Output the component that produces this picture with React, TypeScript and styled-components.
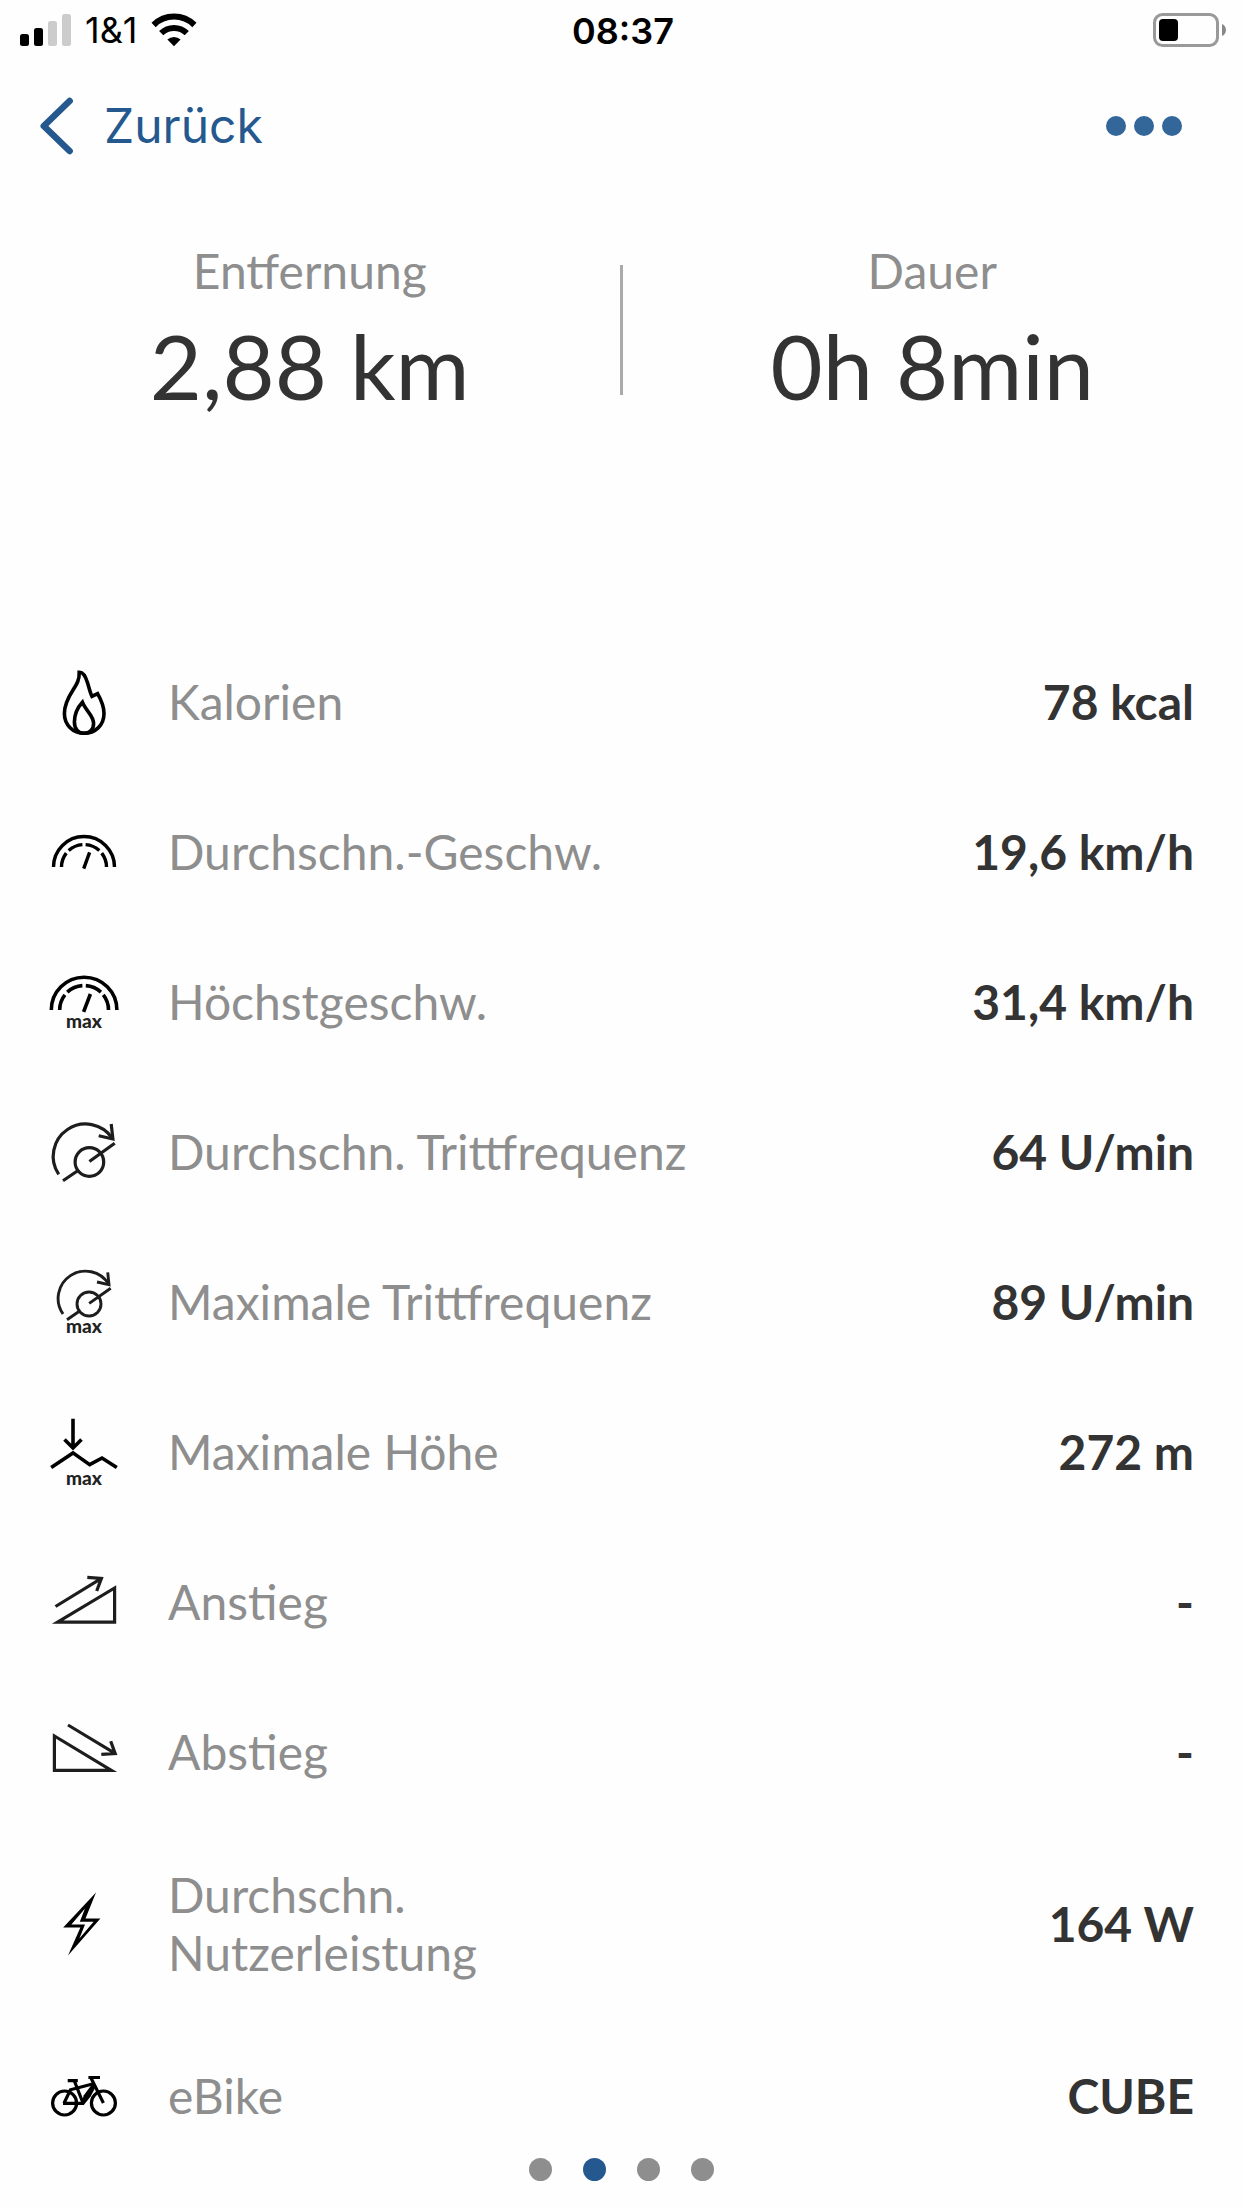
import React from "react";
import styled, { createGlobalStyle } from "styled-components";

const INK = "#333333";
const MUTED = "#8e8e8e";
const BLUE = "#24588f";
const SYSTEM_FONT = 'Inter, "Liberation Sans", sans-serif';
const APP_FONT = 'Lato, "Open Sans", sans-serif';

const GlobalStyle = createGlobalStyle`
  *, *::before, *::after { box-sizing: border-box; }
  body { margin: 0; background: #fefefe; color: ${INK}; font-family: ${APP_FONT}; }
`;

const Screen = styled.div`
  display: flex;
  flex-direction: column;
  min-height: 100vh;
`;

const StatusBar = styled.div`
  display: grid;
  grid-template-columns: 1fr auto 1fr;
  align-items: center;
  height: 60px;
  padding: 0 16px 0 20px;
  color: #000;
  font-family: ${SYSTEM_FONT};
`;

const Carrier = styled.div`
  display: flex;
  align-items: center;
  gap: 14px;
  font-size: 36px;
  line-height: 40px;
`;

const Clock = styled.time`
  padding-top: 2px;
  font-size: 36px;
  line-height: 40px;
  font-weight: 600;
`;

const BatterySlot = styled.div`
  display: flex;
  justify-content: flex-end;
`;

const NavBar = styled.header`
  display: flex;
  align-items: center;
  justify-content: space-between;
  height: 132px;
  padding: 0 60px 0 40px;
`;

const BackButton = styled.button`
  display: flex;
  align-items: center;
  gap: 30px;
  padding: 0;
  border: 0;
  background: none;
  color: ${BLUE};
  font-family: ${SYSTEM_FONT};
  font-size: 48px;
  line-height: 60px;
`;

const MoreButton = styled.button`
  display: flex;
  gap: 8px;
  padding: 0;
  border: 0;
  background: none;
`;

const MoreDot = styled.span`
  width: 20px;
  height: 20px;
  border-radius: 50%;
  background: #336699;
`;

const Summary = styled.dl`
  display: flex;
  margin: 0;
  padding: 48px 0 200px;
`;

const SummaryItem = styled.div`
  flex: 1 1 0;
  display: flex;
  flex-direction: column;
  align-items: center;
`;

const SummaryLabel = styled.dt`
  color: ${MUTED};
  font-size: 48px;
  line-height: 62px;
`;

const SummaryValue = styled.dd`
  margin: 0;
  font-size: 90px;
  line-height: 126px;
`;

const Divider = styled.div`
  width: 3px;
  height: 130px;
  margin-top: 25px;
  background: #aaaaaa;
`;

const StatList = styled.dl`
  margin: 0;
  padding: 0 48px;
`;

const StatRow = styled.div`
  display: flex;
  align-items: center;
  min-height: 150px;
  padding: 38px 0 40px;
  font-size: 48px;
  line-height: 58px;
`;

const StatLabel = styled.dt`
  max-width: 528px;
  margin-left: 48px;
  color: ${MUTED};
`;

const StatValue = styled.dd`
  margin: 0 0 0 auto;
  font-weight: 700;
  white-space: nowrap;
`;

const IconSvg = styled.svg`
  flex: none;
  width: 72px;
  height: 72px;
  margin: -6px 0 -8px;
  overflow: visible;
`;

const IconText = styled.text`
  fill: #222;
  stroke: none;
  font-family: ${APP_FONT};
  font-size: 19px;
  font-weight: 900;
  text-anchor: middle;
`;

const Pager = styled.nav`
  position: fixed;
  left: 0;
  right: 0;
  bottom: 27px;
  display: flex;
  justify-content: center;
  gap: 31px;
`;

const PageDot = styled.button<{ $active: boolean }>`
  width: 23px;
  height: 23px;
  padding: 0;
  border: 0;
  border-radius: 50%;
  background: ${(p) => (p.$active ? BLUE : MUTED)};
`;

type IconProps = { weight?: number; color?: string; children: React.ReactNode };

function Icon({ weight = 3.6, color = "#000", children }: IconProps) {
  return (
    <IconSvg viewBox="0 0 72 72" fill="none" stroke={color} strokeWidth={weight} aria-hidden="true">
      {children}
    </IconSvg>
  );
}

const flame = (
  <Icon>
    <path d="M31.2 5.2C35.5 4.8 38 10.5 39.6 16C41 20.5 42 25.5 44 29.4L49.6 26.6C53.5 33.5 56 39.5 56 46.5C56 58.5 47 66.3 36.2 66.3C25 66.3 16.4 58 16.4 46.5C16.4 37 20.5 30 25 23C29 16.8 31.6 12.5 31.2 5.2Z" />
    <path d="M34.4 35.2C37.5 43.5 45.6 48.5 45.6 56.5C45.6 62 42 66.2 36 66.2C30 66.2 26.4 61.5 26.4 55C26.4 46.5 29.5 40.5 34.4 35.2Z" />
  </Icon>
);

const gauge = (
  <Icon weight={3.4}>
    <path d="M5.5 50A30.5 30.5 0 0 1 66.5 50" />
    <path d="M13.5 50A22.5 22.5 0 0 1 18.3 36.1M20.7 33.5A22.5 22.5 0 0 1 34.4 27.6M37.6 27.6A22.5 22.5 0 0 1 51.3 33.5M53.7 36.1A22.5 22.5 0 0 1 58.5 50" />
    <path d="M35.7 51.7L41.6 35.3" />
  </Icon>
);

const gaugeMax = (
  <Icon>
    <path d="M3.3 43A32.8 32.8 0 0 1 68.9 43" />
    <path d="M11.7 43A24.4 24.4 0 0 1 16.9 27.9M19.3 25.1A24.4 24.4 0 0 1 34.4 18.6M37.8 18.6A24.4 24.4 0 0 1 52.9 25.1M55.3 27.9A24.4 24.4 0 0 1 60.5 43" />
    <path d="M35.6 44.8L42.4 27" />
    <IconText x="36" y="61">max</IconText>
  </Icon>
);

const cadence = (
  <Icon weight={3.2} color="#1d1d1d">
    <path d="M10.7 57.3A32 32 0 1 1 64.3 21.3" />
    <path d="M63.2 7L64.9 22L50.7 18.8" />
    <circle cx="41.4" cy="45" r="14.3" />
    <path d="M41.4 44.5L66.7 26.3M15 63.7L29.7 53.7" />
  </Icon>
);

const cadenceMax = (
  <Icon weight={2.9} color="#1d1d1d">
    <path d="M15 47A27.3 27.3 0 1 1 60.6 17" />
    <path d="M59.7 5.3L61 17.7L49 15" />
    <circle cx="41" cy="37" r="12" />
    <path d="M41.2 36.4L62.7 21.3M19 52.7L31.3 44.3" />
    <IconText x="36" y="66">max</IconText>
  </Icon>
);

const altitudeMax = (
  <Icon>
    <path d="M25 1.7V30.5M16.5 22.5L25 31L33.5 22.5" />
    <path d="M3.2 50.6L25 35.9L41.7 47.7L54 41L68.8 50.6" />
    <IconText x="36" y="68">max</IconText>
  </Icon>
);

const ascent = (
  <Icon weight={3.2} color="#1d1d1d">
    <path d="M7.5 39.5L53 11.6M39.3 10.4L53.4 11.4L48.7 24" />
    <path d="M9.6 55.2L66.6 21V55.2Z" />
  </Icon>
);

const descent = (
  <Icon weight={3.2} color="#1d1d1d">
    <path d="M20 8L67 36.4M62.7 24.2L67.2 36.6L53.3 37.4" />
    <path d="M6.4 19V53.3H63.4Z" />
  </Icon>
);

const bolt = (
  <Icon>
    <path
      fill="#000"
      stroke="none"
      fillRule="evenodd"
      d="M48 3.6L37.5 29.5H52.4L20 66.4L32.4 38.4H15.2ZM23.4 35.6L37 19.4L31.8 32.8H45.6L31.4 49.6L37 35.6Z"
    />
  </Icon>
);

const bike = (
  <Icon weight={3.2}>
    <circle cx="16.6" cy="42" r="12" />
    <circle cx="55.4" cy="42" r="12" />
    <path d="M19.7 19.6H29.8M40.4 16.5H52" />
    <path d="M26.4 20L34.6 41M43 17L55.4 42" />
    <path d="M16 42.3L22.4 28.8L45.5 22.8M15 42.4H36" />
    <path fill="#000" stroke="none" d="M33.4 43.8L35.6 34.6L45 22L47.6 26L42.6 35.6L36 43.8Z" />
  </Icon>
);

const stats = [
  { label: "Kalorien", value: "78 kcal", icon: flame },
  { label: "Durchschn.-Geschw.", value: "19,6 km/h", icon: gauge },
  { label: "Höchstgeschw.", value: "31,4 km/h", icon: gaugeMax },
  { label: "Durchschn. Trittfrequenz", value: "64 U/min", icon: cadence },
  { label: "Maximale Trittfrequenz", value: "89 U/min", icon: cadenceMax },
  { label: "Maximale Höhe", value: "272 m", icon: altitudeMax },
  { label: "Anstieg", value: "-", icon: ascent },
  { label: "Abstieg", value: "-", icon: descent },
  { label: "Durchschn. Nutzerleistung", value: "164 W", icon: bolt },
  { label: "eBike", value: "CUBE", icon: bike },
];

export default function App() {
  const [page, setPage] = React.useState(1);
  return (
    <Screen>
      <GlobalStyle />
      <StatusBar>
        <Carrier>
          <svg width="51" height="32" viewBox="0 0 51 32" aria-hidden="true">
            <rect y="20" width="9" height="12" rx="2.5" />
            <rect x="14" y="14" width="9" height="18" rx="2.5" />
            <rect x="28" y="7" width="9" height="25" rx="2.5" fill="#ccc" />
            <rect x="42" width="9" height="32" rx="2.5" fill="#ccc" />
          </svg>
          <span>1&amp;1</span>
          <svg width="46" height="34" viewBox="0 0 46 34" fill="none" stroke="#000" aria-hidden="true">
            <path strokeWidth="6" d="M2.6 12A29 29 0 0 1 43.4 12" />
            <path strokeWidth="6" d="M10.2 20.2A18.4 18.4 0 0 1 35.8 20.2" />
            <path fill="#000" stroke="none" d="M16.4 26.6A9.6 9.6 0 0 1 29.6 26.6L23 33.2Z" />
          </svg>
        </Carrier>
        <Clock>08:37</Clock>
        <BatterySlot>
          <svg width="73" height="34" viewBox="0 0 73 34" aria-hidden="true">
            <rect x="1.5" y="1.5" width="63" height="31" rx="8" fill="none" stroke="#999" strokeWidth="3" />
            <rect x="6" y="6" width="19" height="22" rx="4" />
            <path d="M69 11C74.3 13 74.3 21 69 23Z" fill="#888" />
          </svg>
        </BatterySlot>
      </StatusBar>
      <NavBar>
        <BackButton type="button">
          <svg width="34" height="58" viewBox="0 0 34 58" fill="none" stroke="currentColor" strokeWidth="6.6" strokeLinecap="round" strokeLinejoin="round" aria-hidden="true">
            <path d="M29.6 4L3.8 29L29.6 54" />
          </svg>
          Zurück
        </BackButton>
        <MoreButton type="button" aria-label="Mehr">
          <MoreDot />
          <MoreDot />
          <MoreDot />
        </MoreButton>
      </NavBar>
      <main>
        <Summary>
          <SummaryItem>
            <SummaryLabel>Entfernung</SummaryLabel>
            <SummaryValue>2,88 km</SummaryValue>
          </SummaryItem>
          <Divider />
          <SummaryItem>
            <SummaryLabel>Dauer</SummaryLabel>
            <SummaryValue>0h 8min</SummaryValue>
          </SummaryItem>
        </Summary>
        <StatList>
          {stats.map((s) => (
            <StatRow key={s.label}>
              {s.icon}
              <StatLabel>{s.label}</StatLabel>
              <StatValue>{s.value}</StatValue>
            </StatRow>
          ))}
        </StatList>
      </main>
      <Pager aria-label="Seiten">
        {[0, 1, 2, 3].map((i) => (
          <PageDot
            key={i}
            type="button"
            $active={i === page}
            aria-label={`Seite ${i + 1}`}
            aria-current={i === page ? "page" : undefined}
            onClick={() => setPage(i)}
          />
        ))}
      </Pager>
    </Screen>
  );
}
